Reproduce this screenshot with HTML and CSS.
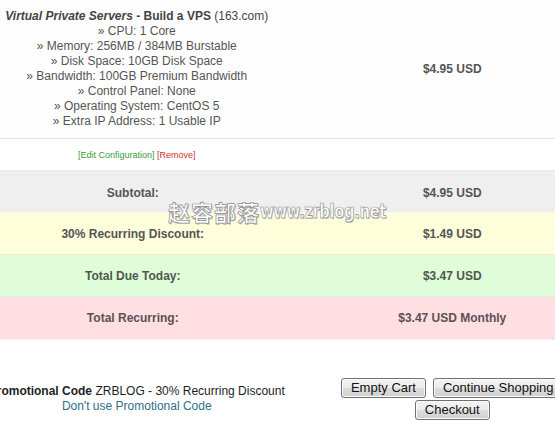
FILE: index.html
```html
<!DOCTYPE html>
<html>
<head>
<meta charset="utf-8">
<link rel="stylesheet" href="styles.css">
</head>
<body>
<div class="cart">
  <table class="cart-table">
    <tr class="product-row">
      <td class="desc">
        <div class="title"><strong><em>Virtual Private Servers</em> - Build a VPS</strong> (163.com)</div>
        <div>» CPU: 1 Core</div>
        <div>» Memory: 256MB / 384MB Burstable</div>
        <div>» Disk Space: 10GB Disk Space</div>
        <div>» Bandwidth: 100GB Premium Bandwidth</div>
        <div>» Control Panel: None</div>
        <div>» Operating System: CentOS 5</div>
        <div>» Extra IP Address: 1 Usable IP</div>
      </td>
      <td class="amount">$4.95 USD</td>
    </tr>
    <tr class="edit-row">
      <td class="edit"><a class="edit-link">[Edit Configuration]</a> <a class="remove-link">[Remove]</a></td>
      <td></td>
    </tr>
    <tr class="summary subtotal">
      <td class="label">Subtotal:</td>
      <td class="amount">$4.95 USD</td>
    </tr>
    <tr class="summary discount">
      <td class="label">30% Recurring Discount:</td>
      <td class="amount">$1.49 USD</td>
    </tr>
    <tr class="summary total">
      <td class="label">Total Due Today:</td>
      <td class="amount">$3.47 USD</td>
    </tr>
    <tr class="summary recurring">
      <td class="label">Total Recurring:</td>
      <td class="amount">$3.47 USD Monthly</td>
    </tr>
  </table>
  <div class="actions">
    <div class="promo">
      <div><strong>Promotional Code</strong> ZRBLOG - 30% Recurring Discount</div>
      <div><a class="promo-link">Don't use Promotional Code</a></div>
    </div>
    <div class="buttons">
      <div class="button-row">
        <button class="btn">Empty Cart</button>
        <button class="btn">Continue Shopping</button>
      </div>
      <div class="button-row">
        <button class="btn">Checkout</button>
      </div>
    </div>
  </div>
</div>
<div class="watermark"><span class="wm-cjk">赵容部落</span><span class="wm-latin">www.zrblog.net</span></div>
</body>
</html>
```

FILE: styles.css
```css
html, body {
  margin: 0;
  padding: 0;
  overflow: hidden;
  background: #ffffff;
}

body {
  font-family: "Liberation Sans", Arial, sans-serif;
  font-size: 12px;
  color: #555555;
  width: 555px;
  height: 425px;
  position: relative;
}

.cart {
  width: 631px;
  margin-left: -21px;
}

.cart-table {
  width: 100%;
  border-collapse: collapse;
  table-layout: fixed;
}

.cart-table td {
  padding: 0;
  text-align: center;
  vertical-align: middle;
}

.product-row td {
  height: 138px;
  border-bottom: 1px solid #e3e3e3;
  background: #fefefe;
}

.desc {
  line-height: 15px;
  box-sizing: border-box;
  padding: 9px 0;
}

.title {
  color: #444444;
}

.amount {
  font-weight: bold;
}

.edit-row td {
  height: 31px;
  border-bottom: 1px solid #ececec;
}

.edit {
  font-size: 9px;
  padding-top: 1px;
}

.edit-link {
  color: #3b9a3b;
}

.remove-link {
  color: #cc3333;
}

.summary td {
  height: 41px;
  border-bottom: 1px solid #f7f7f0;
}

.summary .label {
  font-weight: bold;
  padding-right: 8px;
}

.subtotal td {
  background: #efeff0;
  height: 39px;
  padding-top: 2px;
}

.discount td {
  background: #fefedb;
  border-bottom-color: #efeccd;
}

.total td {
  background: #e0fdd9;
  color: #4e584e;
  border-bottom-color: #e6e9df;
}

.recurring td {
  background: #ffdfe1;
  color: #5c5055;
  height: 42px;
  border-bottom-color: #fbeef0;
}

.actions {
  display: grid;
  grid-template-columns: 1fr 1fr;
  align-items: center;
  margin-top: 38px;
}

.promo {
  text-align: center;
  line-height: 15px;
  color: #1e1e1e;
  white-space: nowrap;
  display: flex;
  flex-direction: column;
  align-items: center;
}

.promo-link {
  color: #2f6f8c;
}

.buttons {
  display: flex;
  flex-direction: column;
  align-items: center;
  gap: 2px;
}

.button-row {
  display: flex;
  justify-content: center;
  gap: 7px;
  white-space: nowrap;
}

.btn {
  font-family: "Liberation Sans", Arial, sans-serif;
  font-size: 13px;
  line-height: 16px;
  height: 20px;
  padding: 1px 9px;
  margin: 0;
  color: #111111;
  border: 1px solid #707070;
  border-radius: 3px;
  background: linear-gradient(to bottom, #f3f3f3 0%, #ebebeb 50%, #dddddd 50%, #d0d0d0 100%);
  box-shadow: inset 0 0 0 1px #fbfbfb;
}

.watermark {
  position: absolute;
  left: 168px;
  top: 195px;
  white-space: nowrap;
  display: flex;
  align-items: center;
  pointer-events: none;
}

.wm-cjk {
  font-family: "Noto Sans CJK SC", sans-serif;
  font-weight: bold;
  font-size: 22px;
  letter-spacing: 1px;
  color: #ffffff;
  -webkit-text-stroke: 0.7px #8a8a8a;
  text-shadow: 1px 1px 0 #c4c4c4;
}

.wm-latin {
  font-family: "DejaVu Sans", sans-serif;
  font-weight: bold;
  font-size: 19px;
  letter-spacing: -0.5px;
  color: #ffffff;
  -webkit-text-stroke: 0.7px #8a8a8a;
  text-shadow: 1px 1px 0 #c4c4c4;
  display: inline-block;
  transform: scaleX(0.78);
  transform-origin: left center;
}
```
